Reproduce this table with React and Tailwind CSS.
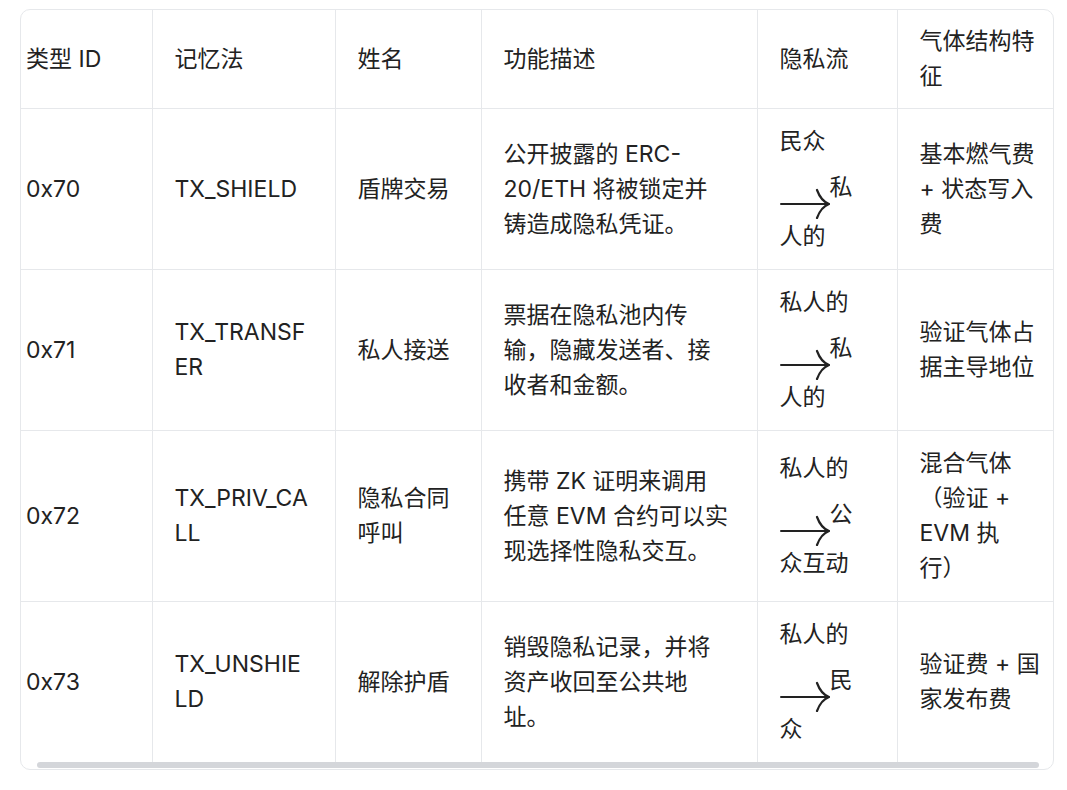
import React from 'react';

const header = [['类型 ID'], ['记忆法'], ['姓名'], ['功能描述'], ['隐私流'], ['气体结构特', '征']];

const rows = [
  {
    id: '0x70',
    mnemonic: ['TX_SHIELD'],
    name: ['盾牌交易'],
    desc: ['公开披露的 ERC-', '20/ETH 将被锁定并', '铸造成隐私凭证。'],
    flow: { from: '民众', mid: '私', to: '人的' },
    gas: ['基本燃气费', '+ 状态写入', '费'],
  },
  {
    id: '0x71',
    mnemonic: ['TX_TRANSF', 'ER'],
    name: ['私人接送'],
    desc: ['票据在隐私池内传', '输，隐藏发送者、接', '收者和金额。'],
    flow: { from: '私人的', mid: '私', to: '人的' },
    gas: ['验证气体占', '据主导地位'],
  },
  {
    id: '0x72',
    mnemonic: ['TX_PRIV_CA', 'LL'],
    name: ['隐私合同', '呼叫'],
    desc: ['携带 ZK 证明来调用', '任意 EVM 合约可以实', '现选择性隐私交互。'],
    flow: { from: '私人的', mid: '公', to: '众互动' },
    gas: ['混合气体', '（验证 +', 'EVM 执', '行）'],
  },
  {
    id: '0x73',
    mnemonic: ['TX_UNSHIE', 'LD'],
    name: ['解除护盾'],
    desc: ['销毁隐私记录，并将', '资产收回至公共地', '址。'],
    flow: { from: '私人的', mid: '民', to: '众' },
    gas: ['验证费 + 国', '家发布费'],
  },
];

function Lines({ lines }) {
  return lines.map((l, i) => (
    <div key={i} className="whitespace-nowrap">
      {l}
    </div>
  ));
}

function Arrow() {
  return (
    <svg width="50" height="60" viewBox="0 0 50 60" className="shrink-0">
      <path d="M1 45 H48" stroke="#222" strokeWidth="2" fill="none" strokeLinecap="round" />
      <path
        d="M37 31 Q41 42 49 45 Q41 48 37 59"
        stroke="#222"
        strokeWidth="2.2"
        fill="none"
        strokeLinecap="round"
      />
    </svg>
  );
}

function Flow({ flow }) {
  return (
    <div>
      <div className="whitespace-nowrap">{flow.from}</div>
      <div className="flex h-[60px] items-start">
        <Arrow />
        <span className="mt-[11px] whitespace-nowrap">{flow.mid}</span>
      </div>
      <div className="whitespace-nowrap">{flow.to}</div>
    </div>
  );
}

const cell = 'align-middle border-[#e6e8eb]';
const colPad = ['pl-[5px] pr-[22px]', 'px-[22px]', 'px-[22px]', 'px-[22px]', 'px-[22px]', 'pl-[22px] pr-[5px]'];

export default function App() {
  return (
    <div className="min-h-[790px] bg-white pt-[9px] pl-[20px]">
      <div
        className="w-[1034px] overflow-hidden rounded-[10px] border border-[#e6e8eb] bg-white text-[23px] leading-[35px] text-[#222]"
        style={{ fontFamily: 'Inter, "Noto Sans CJK SC", sans-serif' }}
      >
        <table className="w-full table-fixed border-collapse">
          <colgroup>
            <col className="w-[131px]" />
            <col className="w-[183px]" />
            <col className="w-[146px]" />
            <col className="w-[276px]" />
            <col className="w-[140px]" />
            <col />
          </colgroup>
          <thead>
            <tr className="border-b border-[#e6e8eb]">
              {header.map((h, i) => (
                <th
                  key={i}
                  className={`${cell} ${colPad[i]} py-[14px] text-left font-normal ${i < 5 ? 'border-r' : ''}`}
                >
                  <Lines lines={h} />
                </th>
              ))}
            </tr>
          </thead>
          <tbody>
            {rows.map((r, ri) => (
              <tr key={r.id} className={ri < rows.length - 1 ? 'border-b border-[#e6e8eb]' : ''}>
                <td className={`${cell} ${colPad[0]} py-[15px] border-r`}>{r.id}</td>
                <td className={`${cell} ${colPad[1]} py-[15px] border-r`}>
                  <Lines lines={r.mnemonic} />
                </td>
                <td className={`${cell} ${colPad[2]} py-[15px] border-r`}>
                  <Lines lines={r.name} />
                </td>
                <td className={`${cell} ${colPad[3]} py-[15px] border-r`}>
                  <Lines lines={r.desc} />
                </td>
                <td className={`${cell} ${colPad[4]} py-[15px] border-r`}>
                  <Flow flow={r.flow} />
                </td>
                <td className={`${cell} ${colPad[5]} py-[15px]`}>
                  <Lines lines={r.gas} />
                </td>
              </tr>
            ))}
          </tbody>
        </table>
        <div className="h-[7px] pl-[16px] pr-[14px]">
          <div className="h-[6px] rounded-full bg-[#d4d6da]" />
        </div>
      </div>
    </div>
  );
}
